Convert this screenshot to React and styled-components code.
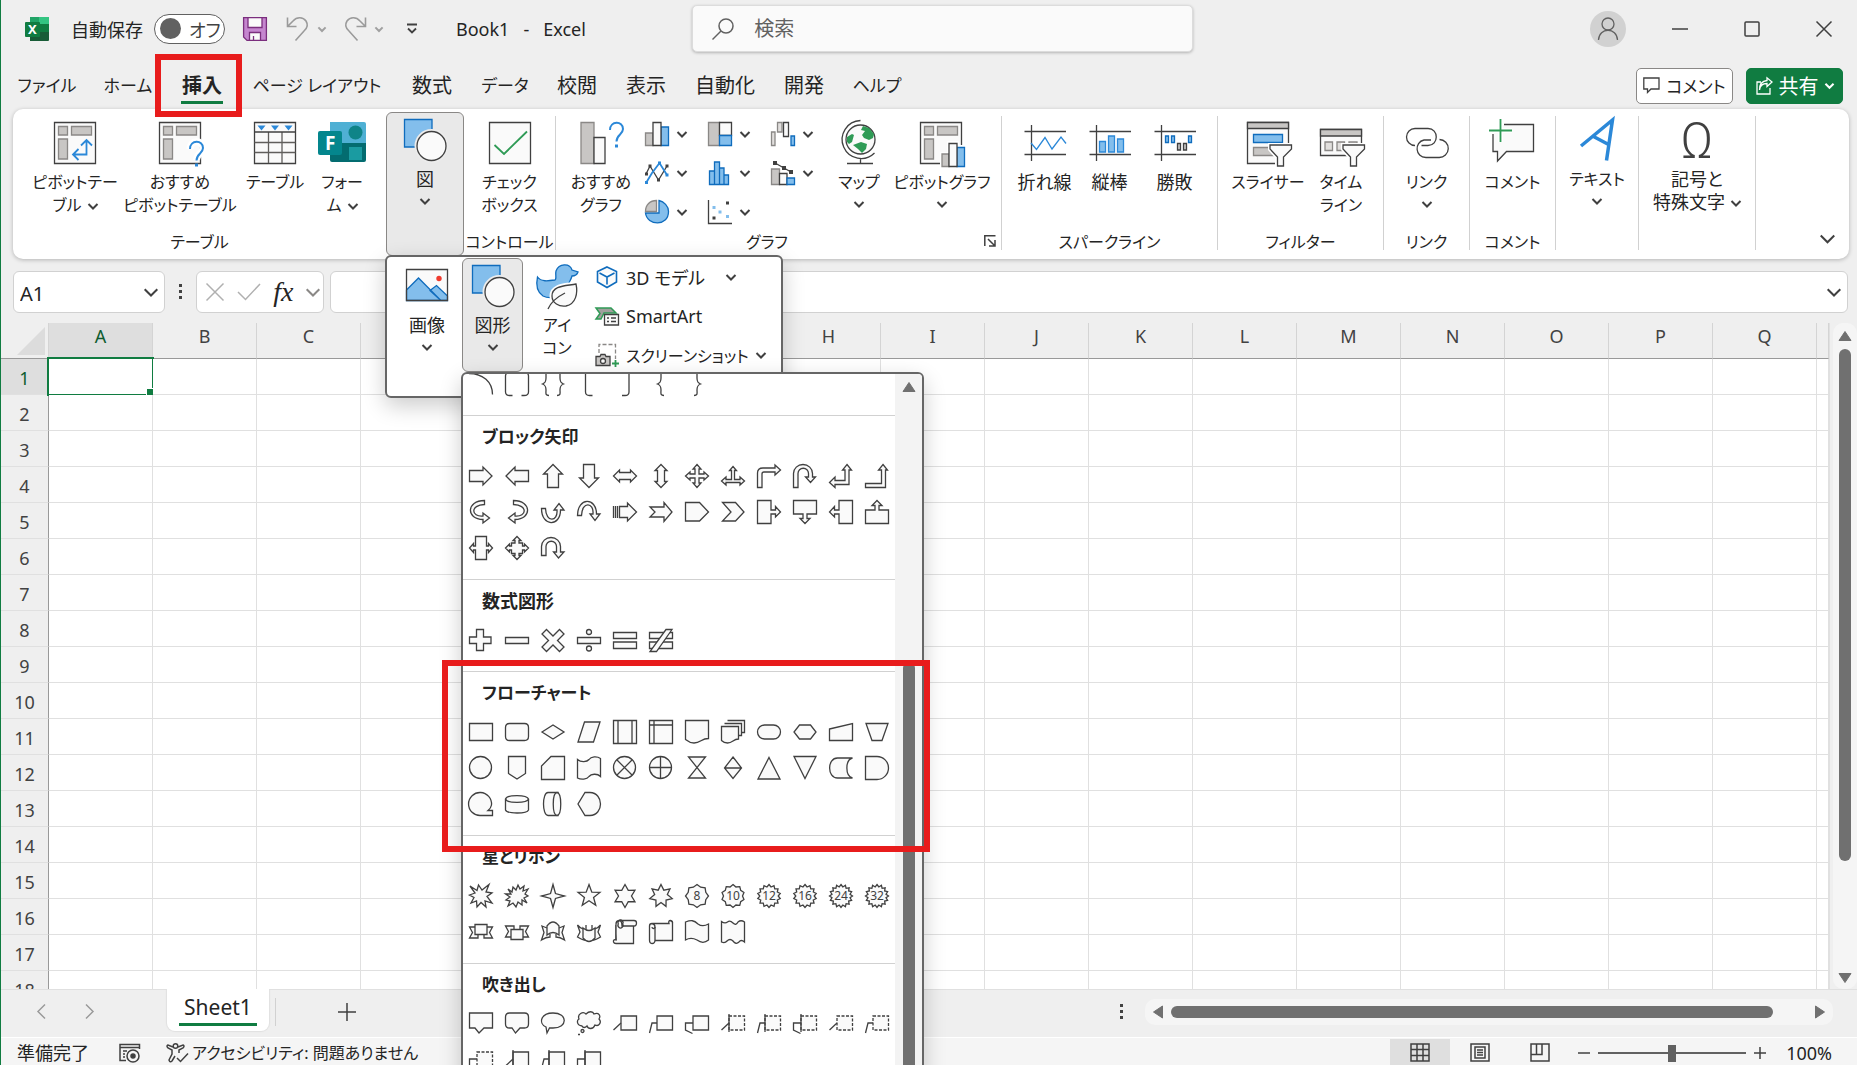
import React from 'react';
import styled, { createGlobalStyle, css } from 'styled-components';

const GlobalStyle = createGlobalStyle`
  * {
    box-sizing: border-box;
  }

  body {
    margin: 0;
    background: #efefef;
    color: #242424;
    font-family: "Noto Sans", "Noto Sans CJK JP", sans-serif;
    font-size: 18px;
    font-feature-settings: "palt";
  }

  button, input {
    font: inherit;
    font-feature-settings: inherit;
    color: inherit;
  }

  button {
    padding: 0;
    border: 0;
    background: none;
    white-space: nowrap;
    cursor: pointer;
  }

  svg {
    display: block;
    flex: none;
    overflow: visible;
  }
`;

const INK = '#404040';
const BLUE = '#0f6cbd';
const SKY = '#83beec';
const PAPER = '#fafafa';
const GRAY = '#c8c6c4';
const MID = '#8a8886';

/* ---------- small shared icons ---------- */

const Chevron = ({ size = 10, color = INK, weight = 2 }) => (
  <svg width={size} height={size} viewBox="0 0 10 10" fill="none" stroke={color} strokeWidth={(weight * 10) / size}>
    <path d="M.5 3L5 7.5 9.5 3" />
  </svg>
);

const Triangle = ({ turn = 0 }) => (
  <svg width="14" height="14" viewBox="0 0 14 14">
    <path d="M7 2.5L13 11.5H1z" fill="#707070" stroke="#707070" strokeLinejoin="round" transform={`rotate(${turn} 7 7)`} />
  </svg>
);

const Icon = ({ size = 24, box = 24, children }) => (
  <svg width={size} height={size} viewBox={`0 0 ${box} ${box}`} fill="none" stroke={INK} strokeWidth="1.3">
    {children}
  </svg>
);

const BigIcon = ({ children }) => <Icon size={48} box={48}>{children}</Icon>;

/* ---------- ribbon icons ---------- */

const PivotBase = () => (
  <>
    <path d="M3.5 3.5H44.5V44.5H3.5z" fill={PAPER} />
    <path d="M7.5 7.5H16.5V16H7.5zM20.5 7.5H40.5V16H20.5zM7.5 20H16.5V40H7.5z" fill={GRAY} stroke={MID} />
  </>
);

const Question = ({ x = 0, y = 0 }) => (
  <g transform={`translate(${x} ${y})`}>
    <path d="M1 8C1-1.5 14-1.5 14 7 14 12.5 7.5 12.5 7.5 19" stroke="#fff" strokeWidth="7" />
    <path d="M1 8C1-1.5 14-1.5 14 7 14 12.5 7.5 12.5 7.5 19.5" stroke="#2b88d8" strokeWidth="2" />
    <path d="M7.5 22.5V25.5" stroke="#2b88d8" strokeWidth="3" />
  </g>
);

const PivotIcon = () => (
  <BigIcon>
    <PivotBase />
    <path d="M35.5 21V35.5H22M30 26.5L35.5 21 41 26.5M27.5 30L22 35.5 27.5 41" stroke="#2b88d8" strokeWidth="1.8" />
  </BigIcon>
);

const PivotHelpIcon = () => (
  <BigIcon>
    <PivotBase />
    <Question x={33} y={22} />
  </BigIcon>
);

const TableIcon = () => (
  <BigIcon>
    <path d="M3.5 3.5H44.5V44.5H3.5z" fill={PAPER} />
    <path d="M3.5 23.5H44.5M3.5 33.5H44.5M17.5 13V44M31 13V44" stroke="#605e5c" />
    <path d="M3.5 13H44.5" />
    <path d="M6.5 6.5H14.5L10.5 11.5zM20 6.5H28L24 11.5zM33.5 6.5H41.5L37.5 11.5z" fill="#2b88d8" stroke="none" />
  </BigIcon>
);

const FormsIcon = () => (
  <BigIcon>
    <g stroke="none">
      <path d="M12 3H46Q48 3 48 5V25H12z" fill="#4fb0d4" />
      <path d="M12 24H48V41Q48 43 46 43H14Q12 43 12 41z" fill="#036c70" />
      <circle cx="37.5" cy="13.5" r="7" fill="#0f8488" />
      <path d="M31 28H44V41H31z" fill="#1a9ba1" />
      <rect y="12" width="24" height="24" rx="2" fill="#04868d" />
      <text x="7" y="31" fill="#fff" fontSize="19" fontWeight="700">F</text>
    </g>
  </BigIcon>
);

const ShapesIcon = () => (
  <BigIcon>
    <path d="M3.5 3.5H31V31H3.5z" fill={SKY} stroke={BLUE} />
    <circle cx="30.5" cy="30" r="17" fill="#ececec" stroke="none" />
    <circle cx="30.5" cy="30" r="14.5" fill={PAPER} />
  </BigIcon>
);

const CheckboxIcon = () => (
  <BigIcon>
    <path d="M3.5 3.5H44.5V44.5H3.5z" fill={PAPER} />
    <path d="M8.5 26L18 35 41 12.5" stroke="#2f9b56" strokeWidth="1.8" />
  </BigIcon>
);

const ChartHelpIcon = () => (
  <BigIcon>
    <path d="M4 3.5H17V44.5H4z" fill={GRAY} stroke={MID} />
    <path d="M17 18.5H28V44.5H17z" fill={PAPER} />
    <Question x={32} y={3} />
  </BigIcon>
);

const GlobeIcon = () => (
  <BigIcon>
    <circle cx="25.5" cy="20.5" r="14.5" fill={PAPER} />
    <g fill="#2f9b56" stroke="none">
      <path d="M28 7L34 9 39 15 38 19 34 21 29 19 27 16 30 12 26 11z" />
      <path d="M12 18L17 15 19 16 17 23 14 25 12 23z" />
      <path d="M18 26L26 23 32 25 31 30 27 34 23 30z" />
    </g>
    <path d="M25.5 1.5A19 19 0 1 0 39.5 34M25.5 39V44.5M12 44.5H38" />
  </BigIcon>
);

const PivotChartIcon = () => (
  <BigIcon>
    <g transform="translate(-1 0)"><PivotBase /></g>
    <path d="M22 33H29V22H41V26H49V49H22z" fill="#fff" stroke="none" />
    <path d="M24 35H31V47.5H24z" fill={GRAY} stroke={MID} />
    <path d="M39 28.5H46.5V47.5H39z" fill={SKY} stroke={BLUE} />
    <path d="M31 24.5H39V47.5H31z" fill={PAPER} />
  </BigIcon>
);

const SparkAxes = () => <path d="M3.5 12.5H45M3.5 35.5H45M10.5 6V42" />;

const SparkLineIcon = () => (
  <BigIcon>
    <SparkAxes />
    <path d="M10 24L15.5 30.5 24 18.5 31 30 40 18 45 24.5" stroke="#2b88d8" />
  </BigIcon>
);

const SparkColumnIcon = () => (
  <BigIcon>
    <SparkAxes />
    <path d="M13.5 22.5H19.5V33H13.5zM22.5 17H28.5V33H22.5zM31.5 20H37.5V33H31.5z" fill={SKY} stroke="#2b88d8" />
  </BigIcon>
);

const SparkWinIcon = () => (
  <BigIcon>
    <SparkAxes />
    <path d="M14.5 17H17.5V23.5H14.5zM20.5 17H23.5V23.5H20.5zM37.5 17H40.5V23.5H37.5z" fill={SKY} stroke={BLUE} />
    <path d="M26.5 24.5H29.5V31H26.5zM32.5 24.5H35.5V31H32.5z" fill={GRAY} />
  </BigIcon>
);

const Funnel = () => (
  <>
    <path d="M24 24H49V49H31V39L24 31z" fill="#fff" stroke="none" />
    <path d="M26 26H47.5V30L39.5 38V47H33.5V38L26 30z" fill={PAPER} />
  </>
);

const SlicerIcon = () => (
  <BigIcon>
    <path d="M3.5 3.5H44.5V44.5H3.5z" fill={PAPER} />
    <path d="M3.5 3.5H44.5V9.5H3.5z" fill={GRAY} />
    <path d="M9.5 15.5H38.5V23.5H9.5z" fill={SKY} stroke={BLUE} />
    <path d="M9.5 28.5H38.5V36.5H9.5z" fill={GRAY} stroke={MID} />
    <Funnel />
  </BigIcon>
);

const TimelineIcon = () => (
  <BigIcon>
    <path d="M3.5 10.5H44.5V36.5H3.5z" fill={PAPER} />
    <path d="M3.5 10.5H44.5V17H3.5z" fill={GRAY} />
    <path d="M8 23H15.5V31.5H8zM20 23H27.5V31.5H20zM32 23H40V31.5H32z" fill="#e1dfdd" stroke={MID} />
    <Funnel />
  </BigIcon>
);

const LinkIcon = () => (
  <BigIcon>
    <path d="M12 26.5A8.5 8.5 0 0 1 12 9.5H25C36 9.5 36 26.5 25 26.5H18.5" />
    <path d="M36.5 20.5A9 9 0 0 1 36 38.5H23C12 38.5 11 23 21 21H28" />
  </BigIcon>
);

const CommentIcon = () => (
  <BigIcon>
    <path d="M15 5.5H44.5V32.5H17.5L8.5 42V32.5H4V15" fill={PAPER} />
    <path d="M11.5 0V23M0 11.5H23" stroke="#fff" strokeWidth="5" />
    <path d="M11.5 0V23M0 11.5H23" stroke="#2f9b56" strokeWidth="1.8" />
  </BigIcon>
);

const WordArtIcon = () => (
  <BigIcon>
    <path d="M8 30L39.5 4 33.5 44.5M20.5 20.5L36.5 29" stroke="#2b88d8" strokeWidth="3.5" />
  </BigIcon>
);

const OmegaIcon = () => (
  <BigIcon>
    <text x="24" y="42" textAnchor="middle" fontSize="50" fontFamily="Roboto" fontWeight="300" fill={INK} stroke="none">Ω</text>
  </BigIcon>
);

const PictureIcon = () => (
  <BigIcon>
    <path d="M3.5 7.5H44.5V38.5H3.5z" fill={PAPER} stroke="none" />
    <path d="M3.5 28L15.5 16 38 38.5H3.5zM27 28.5L33.5 23.5 44.5 34V38.5H38z" fill={SKY} stroke={BLUE} />
    <circle cx="36" cy="16.5" r="2.7" fill="#f03a2e" stroke="none" />
    <path d="M3.5 7.5H44.5V38.5H3.5z" />
  </BigIcon>
);

const DuckIcon = () => (
  <BigIcon>
    <path d="M4.500 15C8 20 15 19 22 18 24 17 22 13 23 9 26 1 37 1 39 8L45 10C44 13 41 14 39 14 38 18 36 20 35 23 33 34 18 38 10 34 4 30 3 22 4.500 15z" fill={SKY} stroke={BLUE} />
    <path d="M43 22C34 24 19 23 19 34 19 41 26 45 33 44 43 42 45 31 43 22z" fill={PAPER} stroke="#fff" strokeWidth="5" />
    <path d="M43 22C34 24 19 23 19 34 19 41 26 45 33 44 43 42 45 31 43 22zM15 47C18 40 24 35 32 31" fill={PAPER} />
  </BigIcon>
);

const CubeIcon = () => (
  <Icon>
    <path d="M12 2L21.5 6.5V17L12 22.5 2.5 17V6.5zM4.5 8L12 12 19.5 8M12 12V19.5" stroke={BLUE} strokeWidth="1.6" fill={PAPER} />
  </Icon>
);

const SmartArtIcon = () => (
  <Icon>
    <path d="M1 4H16L21 9H9L6 15H1L5 9.5z" fill="#a19f9d" stroke="#2f9b56" strokeWidth="1.5" />
    <path d="M9.5 10.5H23.5V21H9.5z" fill={PAPER} />
    <path d="M12 14H14M16 14H21M12 17.5H14M16 17.5H21" />
  </Icon>
);

const ScreenshotIcon = () => (
  <Icon>
    <path d="M4 10V1.5H20.5V16" stroke={MID} strokeDasharray="4 2" />
    <path d="M1 13.5H5L6 11.5H10L11 13.5H15V22.5H1z" fill={GRAY} />
    <circle cx="8" cy="18" r="2.5" fill={PAPER} />
    <path d="M20.5 17V24M17 20.5H24" stroke="#2f9b56" strokeWidth="1.8" />
  </Icon>
);

/* chart pickers, three rows of the graph group */
const chartIcons = [
  ['縦棒グラフ', <>
    <path d="M.5 11H8V23.5H.5z" fill={GRAY} stroke={MID} />
    <path d="M16 5H23.5V23.5H16z" fill={SKY} stroke={BLUE} />
    <path d="M8 .5H16V23.5H8z" fill={PAPER} />
  </>],
  ['階層構造グラフ', <>
    <path d="M.5 .5H11.5V23.5H.5z" fill={GRAY} stroke={MID} />
    <path d="M11.5 .5H23.5V13.5H11.5z" fill={PAPER} />
    <path d="M11.5 13.5H23.5V23.5H11.5z" fill={SKY} stroke={BLUE} />
  </>],
  ['ウォーターフォール', <>
    <path d="M.5 10H4V23.5H.5zM6.5 .5H11V10H6.5z" fill="#e1dfdd" stroke={MID} />
    <path d="M12.5 .5H17.5V14.5H12.5z" fill={PAPER} />
    <path d="M20 14H23.5V23.5H20z" fill={SKY} stroke={BLUE} />
  </>],
  ['折れ線グラフ', <>
    <path d="M1 13L5 5 13.5 19 22 5" />
    <path d="M1 22L7 12 14.5 2 22 14" stroke="#2b88d8" strokeWidth="1.8" />
    <path d="M3.5 3.5h3v3h-3zM12 17.5h3v3h-3zM20.5 3.5h3v3h-3zM0 11.5h3v3H0z" fill={INK} stroke="none" />
    <path d="M0 20h3v3H0zM13 .5h3v3h-3zM20.5 12.5h3v3h-3z" fill="#2b88d8" stroke="none" />
  </>],
  ['統計グラフ', <path d="M1.5 10H6.5V23.5H1.5zM6.5 1H11.5V23.5H6.5zM11.5 7H16V23.5H11.5zM16 14H20.5V23.5H16z" fill={SKY} stroke={BLUE} />],
  ['組み合わせグラフ', <>
    <path d="M.5 8H8.5V23.5H.5z" fill={GRAY} stroke={MID} />
    <path d="M8.5 12.5H16V23.5H8.5z" fill={PAPER} />
    <path d="M16 17H23.5V23.5H16z" fill={SKY} stroke={BLUE} />
    <path d="M4 2L13 7 20 11" />
    <path d="M2 0h4v4H2zM11 5h4v4h-4zM18 9h4v4h-4z" fill={INK} stroke="none" />
  </>],
  ['円グラフ', <>
    <path d="M14 .5V13H.5C2 26 23.5 27 23.5 11.5 23.5 6 19 1.5 14 .5z" fill={SKY} stroke={BLUE} />
    <path d="M11.5 .5V11.5H.5C.5 5 5 .5 11.5 .5z" fill={GRAY} stroke={MID} />
  </>],
  ['散布図', <>
    <path d="M.5 0V23.5H24" />
    <path d="M18 1.5h3v3h-3zM4.5 16.5h3v3h-3z" fill={INK} stroke="none" />
    <path d="M4.5 6h3v3h-3zM10.5 10.5h3v3h-3zM18 15h3v3h-3z" fill={SKY} stroke="none" />
  </>],
];

/* ---------- shape gallery data (24 x 24 boxes) ---------- */

const star = (points, inner, outer = 11.5) => {
  const out = [];
  for (let i = 0; i < points * 2; i += 1) {
    const r = i % 2 ? inner : outer;
    const a = (Math.PI * i) / points - Math.PI / 2;
    out.push(`${(12 + r * Math.cos(a)).toFixed(2)} ${(12 + r * Math.sin(a)).toFixed(2)}`);
  }
  return `M${out.join('L')}z`;
};

const FLIP = 'matrix(-1 0 0 1 24 0)';
const UPSIDE = 'matrix(1 0 0 -1 0 24)';
const CURVED = 'M15.5 .5C-3 .5-3 19.5 14 19.5V23L20.5 18 14 13V16C2 17 1 5 15.5 4.5z';
const CIRCLE = 'M.5 11.5a11 11 0 1 0 22 0a11 11 0 1 0-22 0z';
const CALLOUT_RIGHT = 'M.5 .5H14V10H18.5V6.5L23.5 12 18.5 17V14H14V23.5H.5z';

const line = (d) => ({ d, fill: 'none' });
const turned = (d, t) => ({ d, t });
const badge = (n, points, inner) => [star(points, inner), { text: n }];
const boxCallout = (leader, dashed, bar) => [
  dashed ? { d: 'M8 4H23.5V18H8z', dash: '3 1.5' } : 'M8 4H23.5V18H8z',
  line(leader),
  ...(bar ? [line('M8 2V20')] : []),
];

const lineShapes = [
  [line('M0 1.5C14 1.5 23.5 10 23.5 22.5')],
  [line('M7.5 23.5H5Q.5 23.5 .5 20V4Q.5 .5 5 .5M16.5 23.5H19Q23.5 23.5 23.5 20V4Q23.5 .5 19 .5')],
  [line('M8 23.5C4 23.5 5 21 5 18 5 14 4 13 1.5 12 4 11 5 10 5 6V0M16 23.5C20 23.5 19 21 19 18 19 14 20 13 22.5 12 20 11 19 10 19 6V0')],
  [line('M15.5 23.5H12.5Q8.5 23.5 8.5 20V0')],
  [line('M9 23.5H12Q16 23.5 16 20V0')],
  [line('M15 23.5C11 23.5 12 21 12 18 12 14 11 13 8.5 12 11 11 12 10 12 6V0')],
  [line('M9 23.5C13 23.5 12 21 12 18 12 14 13 13 15.5 12 13 11 12 10 12 6V0')],
];

const blockArrows = [
  ['M.5 6.5H14V3L23 12 14 21V17.5H.5z'],
  ['M23.5 6.5H10V3L1 12 10 21V17.5H23.5z'],
  ['M6.5 23.5V10H2.5L12 .5 21.5 10H17.5V23.5z'],
  ['M6.5 .5V14H2.5L12 23.5 21.5 14H17.5V.5z'],
  ['M.5 12L6.5 6V8.5H17.5V6L23.5 12 17.5 18V15.5H6.5V18z'],
  ['M12 .5L18 6.5H15.5V17.5H18L12 23.5 6 17.5H8.5V6.5H6z'],
  ['M12 .5L16 5H14V10H19V8L23.5 12 19 16V14H14V19H16L12 23.5 8 19H10V14H5V16L.5 12 5 8V10H10V5H8z'],
  ['M12 2.500L15.5 6.5H13.5V15.5H19V13L23.5 17 19 21V18.5H5V21L.5 17 5 13V15.5H10.5V6.5H8.5z'],
  ['M.5 23.5V9Q.5 4 6 4H18V1L23.5 6 18 11V8H7Q5 8 5 10V23.5z'],
  ['M.5 23.5V9.5A9.5 9 0 0 1 19.5 9.5V13H22.5L17.5 18.5 12.5 13H15.5V9.5A5 5 0 0 0 5 9.5V23.5z'],
  ['M18 .5L22.5 6H20V20.5H6V23.5L.5 18.5 6 13V16.5H16V6H13.5z'],
  ['M18 .5L22.5 6H20.5V23.5H.5V19.5H16.5V6H13.5z'],
  [CURVED],
  [turned(CURVED, FLIP)],
  [turned(CURVED, 'matrix(0 -1 1 0 0 24)')],
  [turned(CURVED, 'matrix(0 1 1 0 0 0)')],
  ['M6.5 6.5H14.5V3L23.5 12 14.5 21V17.5H6.5z', line('M.5 6V18M2.5 6V18M4.5 6V18')],
  ['M1 7H15V2.5L23 12 15 21.5V17H1L6 12z'],
  ['M.5 2.5H14.5L23.5 12 14.5 21H.5z'],
  ['M1.5 2.5H14.5L23 12 14.5 21H1.5L10 12z'],
  [CALLOUT_RIGHT],
  ['M.5 .5H23.5V14H14V18.5H17L12 23.5 7 18.5H10V14H.5z'],
  [turned(CALLOUT_RIGHT, FLIP)],
  ['M.5 23.5V10H10V5.5H7L12 .5 17 5.5H14V10H23.5V23.5z'],
  ['M6.5 .5H17.5V10H19.5V7.5L23.5 12 19.5 16.5V14H17.5V23.5H6.5V14H4.5V16.5L.5 12 4.5 7.5V10H6.5z'],
  ['M12 .5L16 4.5H14V7H17.5V10H19.5V8L23.5 12 19.5 16V14H17.5V17.5H14V19.5H16L12 23.5 8 19.5H10V17.5H6.5V14H4.5V16L.5 12 4.5 8V10H6.5V7H10V4.5H8z'],
  ['M.5 19.5V10.5A9.5 9 0 0 1 19.5 10.5V16H23L17.5 22 12.5 16H15.5V10.5A5 5 0 0 0 5 10.5V19.5z'],
];

const equations = [
  ['M7.5 1.5H14.5V9H22V15.5H14.5V22.5H7.5V15.5H.5V9H7.5z'],
  ['M.5 9.5H23.5V15.5H.5z'],
  ['M5.5 1.5L12 8 18.5 1.5 23 6 16.5 12.5 23 19 18.5 23.5 12 17 5.5 23.5 1 19 7.5 12.5 1 6z'],
  ['M.5 9.5H23.5V15.5H.5z', 'M9.5 4a2.5 2.5 0 1 0 5 0a2.5 2.5 0 1 0-5 0z', 'M9.5 20.5a2.5 2.5 0 1 0 5 0a2.5 2.5 0 1 0-5 0z'],
  ['M.5 4.5H23.5V10.5H.5z', 'M.5 14H23.5V20.5H.5z'],
  ['M.5 4.5H23.5V10.5H.5z', 'M.5 14H23.5V20.5H.5z', 'M17 1.5H23L7.5 23.5H1z'],
];

const flowchart = [
  ['M.5 3.5H23.5V20.5H.5z'],
  ['M4.5 3.5H19.5Q23.5 3.5 23.5 7.5V16.5Q23.5 20.5 19.5 20.5H4.5Q.5 20.5 .5 16.5V7.5Q.5 3.5 4.5 3.5z'],
  ['M1 12L12 5 23 12 12 19z'],
  ['M7.5 2H23L16.5 22H1z'],
  ['M.5 .5H23.5V23.5H.5zM5 .5V23.5M19 .5V23.5'],
  ['M.5 .5H23.5V23.5H.5zM5 .5V23.5M.5 5H23.5'],
  ['M.5 .5H23.5V18.5C16 18.5 16 23 9 23 5 23 3 21.5 .5 19.5z'],
  ['M6.5 .5H23.5V12.5H20', 'M3.5 3.5H20.5V15.5H17', 'M.5 6.5H17.5V19C12 19 12 23 6.5 23 4 23 2 22 .5 20.5z'],
  ['M7.5 5H16.5A7 7 0 0 1 16.5 19H7.5A7 7 0 0 1 7.5 5z'],
  ['M6.5 5H17.5L23 12 17.5 19H6.5L1 12z'],
  ['M.5 9L23.5 3.5V20.5H.5z'],
  ['M1 3.5H23L17 20.5H7z'],
  [CIRCLE],
  ['M3.5 .5H20.5V17.5L12 23 3.5 17.5z'],
  ['M10 .5H23.5V23.5H.5V10z'],
  ['M.5 3.5C4 6.5 10 6 12 3.5 14 .5 20 0 23.5 2.5V20.5C20 17 14 18 12 20.5 10 23.5 4 24 .5 22z'],
  [CIRCLE, line('M4 4L19 19M19 4L4 19')],
  [CIRCLE, line('M11.5 .5V22.5M.5 11.5H22.5')],
  ['M3.5 1H20.5L3.5 22H20.5z'],
  ['M12 1L20.5 12 12 22.5 3.5 12zM3.5 12H20.5'],
  ['M12 1.5L23 23H1z'],
  ['M1 .5H23L12 22.5z'],
  ['M8.5 2H23.5C16 4 16 20 23.5 22H8.5C-2 22-2 2 8.5 2z'],
  ['M.5 .5H12A11.5 11.5 0 0 1 12 23.5H.5z'],
  ['M19 18.5H23.5V23.5H11.5A11.5 11.5 0 1 1 22.5 13Q22 16 19 18.5z'],
  ['M.5 7V18C2 22 22 22 23.5 18V7', 'M.5 7C2 2.5 22 2.5 23.5 7 22 11.5 2 11.5 .5 7z'],
  ['M7 .5H17V23.5H7C1 23.5 1 .5 7 .5z', 'M16 .5C21 1 21 23 16 23.5 11 23 11 1 16 .5z'],
  ['M8 .5H13C27 1 27 23 13 23.5H8L1 12z'],
];

const RIBBON = ['M6 7H.5L3.5 12.5 .5 18H9V14.5', 'M18 7H23.5L20.5 12.5 23.5 18H15V14.5', 'M6 4.5H18V14.5H6z'];

const stars = [
  ['M1 2L8 6.5 9.5 1 13 6 20 .5 17 8 23 9 18 12.5 23 19 16 17 17 23 12 18.5 8 23 7.5 17 2 19 5 13.5 .5 11 6 9z'],
  ['M3 5L7 8 8 3 11 6 13 1 15 5 19 2 18 7 23 5 20 10 23 12 19 14 22 19 17 16 17 21 13 18 11 23 8 19 3 22 5 17 1 16 5 13 .5 10 6 10z'],
  [star(4, 3.5)],
  [star(5, 4.8)],
  [star(6, 6.5)],
  [star(7, 6.5)],
  badge('8', 8, 9.5),
  badge('10', 10, 9.5),
  badge('12', 14, 9.2),
  badge('16', 14, 9.2),
  badge('24', 16, 9.2),
  badge('32', 16, 9.2),
  RIBBON,
  RIBBON.map((d) => turned(d, UPSIDE)),
  ['M6 8L1 6 3 12.5 .5 20Q5 17 9 17V14', 'M18 8L23 6 21 12.5 23.5 20Q19 17 15 17V14', 'M6 6Q12-2 18 6V15Q12 10 6 15z'],
  ['M6 9Q3 8 .5 5L3 12 .5 17Q5 20 8 20', 'M18 9Q21 8 23.5 5L21 12 23.5 17Q19 20 16 20', 'M6 8Q12 13 18 8V18Q12 25 6 18z', line('M9 10V5M15 10V5')],
  ['M3 5V20Q0 19 .5 22 1 23.5 3 23.5H20.5V6', 'M6 .5H21Q23.5 .5 23.5 3 23.5 6 21 6H9Q9 .5 6 .5 3 1 3 4V20', line('M5.5 4a2.5 2.5 0 1 0 4 0a2.5 2.5 0 1 0-4 0')],
  ['M3.5 3.5H20Q19 .5 21.5 .5 24 1 23.5 4V20.5H6', 'M.5 6Q.5 3.5 3 3.5 6 4 6 7V20Q6 23.5 3 23.5 .5 23.5 .5 20z', line('M3 7a1.5 1.5 0 1 0 3 0')],
  ['M.5 2C6 0 9 0 13 4 17 7 20 6 23.5 4V20C20 23 16 23 12 20 8 18 4 18 .5 20z'],
  ['M.5 1.5Q4 4 6.5 2 9 0 12 3 15 6 17 2 20-.5 23.5 2V22Q20 19 18 22 15 25 12 21 9 18 6 21 4 23.5 .5 22z'],
];

const callouts = [
  ['M.5 1H23.5V16H15L10 21 6 16H.5z'],
  ['M4.5 1H19.5Q23.5 1 23.5 5V12Q23.5 16 19.5 16H15L10.5 21 7 16H4.5Q.5 16 .5 12V5Q.5 1 4.5 1z'],
  ['M6 21L5 15C-3 11 0 1 12 1 27 1 27 16 12 16 10 16 9 16 8.5 16z'],
  ['M5 14C-1 13 0 8 2 7 0 2 6-1 9 2 12-1 16-1 17 2 22 0 24 4 22 7 25 10 22 15 18 13 16 18 11 17 10 14 8 16 6 16 5 14z', 'M4 19a1.5 1.5 0 1 0 3 0a1.5 1.5 0 1 0-3 0z', line('M1 22.5H3')],
  boxCallout('M.5 18L8 11'),
  boxCallout('M.5 21L3 11H8'),
  boxCallout('M7.5 21.5L.5 18V11H8'),
  boxCallout('M.5 18L8 11', true, true),
  boxCallout('M.5 21L3 11H8', true, true),
  boxCallout('M7.5 21.5L.5 18V11H8', true, true),
  boxCallout('M.5 18L8 11', true),
  boxCallout('M.5 21L3 11H8', true),
  boxCallout('M7.5 21.5L.5 18V11H8', true),
  boxCallout('M.5 18L8 11', false, true),
  boxCallout('M.5 21L3 11H8', false, true),
  boxCallout('M7.5 21.5L.5 18V11H8', false, true),
];

const Shape = ({ parts }) => (
  <Icon>
    {parts.map((part, i) => {
      if (part.text) {
        return <text key={i} x="12" y="16" textAnchor="middle" fontSize="12" fill={INK} stroke="none">{part.text}</text>;
      }
      const p = typeof part === 'string' ? { d: part } : part;
      return <path key={i} d={p.d} fill={p.fill || PAPER} transform={p.t} strokeDasharray={p.dash} />;
    })}
  </Icon>
);

/* ---------- window frame ---------- */

const Window = styled.div`
  display: flex;
  flex-direction: column;
  height: 100vh;
  overflow: hidden;
  border-left: 1px solid #107c41;
  background: #efefef;
`;

const TitleBar = styled.header`
  display: grid;
  grid-template-columns: 25fr 501px 24fr;
  align-items: center;
  height: 57px;
`;

const TitleLeft = styled.div`
  display: flex;
  align-items: center;
  padding-left: 24px;
  white-space: nowrap;
`;

const AutoSave = styled.label`
  display: flex;
  align-items: center;
  gap: 11px;
  margin: 0 18px 0 22px;
`;

const Switch = styled.button`
  display: flex;
  align-items: center;
  gap: 8px;
  width: 71px;
  height: 30px;
  padding-left: 5px;
  border: 1px solid #616161;
  border-radius: 15px;
  background: #fff;
  color: #424242;

  &::before {
    content: "";
    width: 21px;
    height: 21px;
    border-radius: 50%;
    background: #616161;
  }
`;

const QuickButton = styled.button`
  display: flex;
  align-items: center;
  gap: 8px;
  margin-left: ${(p) => p.$gap || 0}px;
`;

const BookName = styled.span`
  margin-left: 38px;
  white-space: pre;
`;

const SearchBox = styled.label`
  display: flex;
  align-items: center;
  gap: 18px;
  height: 47px;
  padding-left: 19px;
  border: 1px solid #dcdcdc;
  border-radius: 5px;
  background: #fafafa;
  box-shadow: 0 1px 3px rgba(0, 0, 0, 0.25);

  input {
    flex: 1;
    min-width: 0;
    border: 0;
    outline: 0;
    background: none;
    font-size: 20px;
  }

  input::placeholder {
    color: #616161;
    opacity: 1;
  }
`;

const WindowButtons = styled.div`
  display: flex;
  justify-content: flex-end;
  align-items: center;
  gap: 56px;
  padding-right: 25px;
`;

const Avatar = styled.button`
  display: grid;
  place-items: center;
  width: 36px;
  height: 36px;
  margin-right: -10px;
  border-radius: 50%;
  background: #d1d1d1;
`;

/* ---------- tabs ---------- */

const TabRow = styled.nav`
  display: flex;
  align-items: center;
  height: 52px;
  padding: 5px 14px 0 18px;
`;

const Tabs = styled.div`
  display: flex;
  gap: 29px;
  flex: 1;
`;

const Tab = styled.button`
  position: relative;
  display: flex;
  justify-content: center;
  width: ${(p) => p.$width}px;
  height: 36px;
  line-height: 36px;
  font-size: ${(p) => (p.$kana ? 17 : 20)}px;
  font-weight: ${(p) => (p.$active ? 700 : 400)};
  border-bottom: 3px solid ${(p) => (p.$active ? '#107c41' : 'transparent')};
`;

const marker = css`
  position: absolute;
  border: 6px solid #e81c1c;
  pointer-events: none;
`;

const TabMarker = styled.span`
  ${marker}
  inset: -14px -19px -16px -26px;
  z-index: 3;
`;

const ActionButton = styled.button`
  display: flex;
  align-items: center;
  justify-content: center;
  gap: 6px;
  width: 97px;
  height: 36px;
  margin-left: 13px;
  border: 1px solid ${(p) => (p.$primary ? '#107c41' : '#8a8886')};
  border-radius: 5px;
  background: ${(p) => (p.$primary ? '#107c41' : '#fff')};
  color: ${(p) => (p.$primary ? '#fff' : '#242424')};
  font-size: ${(p) => (p.$primary ? 20 : 17)}px;
`;

/* ---------- ribbon ---------- */

const Ribbon = styled.section`
  position: relative;
  z-index: 2;
  display: flex;
  flex: none;
  height: 150px;
  margin: 0 8px 0 12px;
  border-radius: 10px;
  background: #fff;
  box-shadow: 0 1px 4px rgba(0, 0, 0, 0.25);
`;

const Group = styled.div`
  display: flex;
  flex-direction: column;
  width: ${(p) => p.$width}px;
  padding-top: 5px;
`;

const GroupBody = styled.div`
  display: flex;
  justify-content: ${(p) => (p.$start ? 'flex-start' : 'center')};
  height: 113px;
  padding-left: ${(p) => p.$start || 0}px;
`;

const GroupLabel = styled.div`
  display: flex;
  align-items: center;
  height: 28px;
  font-size: 16px;
  white-space: nowrap;

  span {
    flex: 1;
    display: flex;
    justify-content: center;
  }

  button {
    margin: 0 5px 0 6px;
  }
`;

const Divider = styled.div`
  width: 1px;
  margin: 7px 0 9px;
  background: #d1d1d1;
`;

const BigButton = styled.button`
  display: flex;
  flex-direction: column;
  align-items: center;
  width: ${(p) => p.$width}px;
  padding-top: ${(p) => (p.$raised ? 2 : 5)}px;
  line-height: 23px;
  font-size: ${(p) => (p.$kanji ? 18 : 16)}px;

  > svg {
    margin-bottom: 4px;
  }
`;

const Line = styled.span`
  display: flex;
  align-items: center;
  justify-content: center;
  gap: 6px;
  width: 100%;
  min-height: ${(p) => (p.$arrow ? 19 : 23)}px;
`;

const Tool = ({ as: Button = BigButton, icon, lines, arrow, ...rest }) => (
  <Button {...rest}>
    {icon}
    {lines.map((text, i) => (
      <Line key={text}>
        {text}
        {arrow === 'inline' && i === lines.length - 1 && <Chevron />}
      </Line>
    ))}
    {arrow === 'below' && <Line $arrow><Chevron /></Line>}
  </Button>
);

const RibbonGroup = ({ width, label, start, launcher, children }) => (
  <Group $width={width}>
    <GroupBody $start={start}>{children}</GroupBody>
    <GroupLabel>
      <span>{label}</span>
      {launcher && (
        <button aria-label="グラフの設定">
          <svg width="12" height="12" viewBox="0 0 12 12" fill="none" stroke={INK} strokeWidth="1.5">
            <path d="M.8 11V.8H11.5M4 4L10.5 10.5M11 5V11H5" />
          </svg>
        </button>
      )}
    </GroupLabel>
  </Group>
);

const ChartGrid = styled.div`
  display: grid;
  grid-template-columns: repeat(3, 63px);
  grid-auto-rows: 39px;
  padding-left: 1px;
`;

const ChartButton = styled.button`
  display: flex;
  align-items: center;
  gap: 8px;
  padding-left: 4px;
`;

const Collapse = styled.button`
  align-self: flex-end;
  margin: 0 14px 13px auto;
`;

/* ---------- illustration menu ---------- */

const MenuHost = styled.div`
  position: relative;
  width: 78px;
  padding-top: 3px;
`;

const MenuButton = styled(BigButton)`
  height: 144px;
  padding-top: 3px;
  border: 1px solid #8a8886;
  border-radius: 6px;
  background: #e9e9e9;
`;

const popup = css`
  position: absolute;
  border: 2px solid #666;
  border-radius: 6px;
  background: #fff;
  box-shadow: 0 8px 22px rgba(0, 0, 0, 0.2);
`;

const MediaMenu = styled.div`
  ${popup}
  top: 146px;
  left: -1px;
  z-index: 4;
  display: flex;
  width: 398px;
  height: 143px;
  padding-left: 6px;
`;

const MediaButton = styled(BigButton)`
  height: 114px;
  margin-top: 1px;
  padding-top: 3px;
  border: 1px solid ${(p) => (p.$open ? '#8a8886' : 'transparent')};
  border-radius: 6px;
  background: ${(p) => (p.$open ? '#e9e9e9' : 'none')};
`;

const ShapesHost = styled.div`
  position: relative;
  margin: 0 3px 0 1px;
`;

const MediaList = styled.div`
  display: grid;
  grid-auto-rows: 39px;
  padding-left: 7px;
`;

const MediaRow = styled.button`
  display: flex;
  align-items: center;
  gap: 7px;
  font-size: ${(p) => (p.$small ? 16 : 18)}px;

  > svg:last-child:not(:first-child) {
    margin-left: ${(p) => p.$arrowGap || 0}px;
  }
`;

/* ---------- shape gallery ---------- */

const Gallery = styled.div`
  ${popup}
  top: 115px;
  left: -1px;
  z-index: 5;
  display: flex;
  width: 463px;
  height: 720px;
`;

const GalleryList = styled.div`
  flex: 1;
`;

const GallerySection = styled.section`
  position: relative;
  padding-bottom: 13px;
  border-bottom: 1px solid #d1d1d1;
`;

const GalleryTitle = styled.h3`
  height: 42px;
  margin: 0;
  padding-left: 19px;
  line-height: 42px;
  font-size: ${(p) => (p.$kana ? 17 : 18)}px;
  font-weight: 700;
`;

const ShapeGrid = styled.div`
  display: grid;
  grid-template-columns: repeat(12, 36px);
  grid-auto-rows: 36px;
  ${(p) => p.$clipped && css`
    height: 28px;
    align-content: end;
    overflow: hidden;
  `}

  button {
    display: grid;
    place-items: center;
  }
`;

const SectionMarker = styled.span`
  ${marker}
  inset: -12px -35px -17px -21px;
  z-index: 2;
`;

const GalleryScroll = styled.div`
  display: flex;
  flex-direction: column;
  align-items: center;
  width: 27px;
  padding-top: 6px;
  border-radius: 0 4px 0 0;
  background: #f3f3f3;

  i {
    width: 12px;
    height: 410px;
    margin-top: 268px;
    border-radius: 6px;
    background: #707070;
  }
`;

const ShapeSection = ({ title, items, marked, clipped, kana }) => (
  <GallerySection>
    {title && <GalleryTitle $kana={kana}>{title}</GalleryTitle>}
    <ShapeGrid $clipped={clipped}>
      {items.map((parts, i) => (
        <button key={i} aria-label={`${title || '線'} ${i + 1}`}><Shape parts={parts} /></button>
      ))}
    </ShapeGrid>
    {marked && <SectionMarker />}
  </GallerySection>
);

const ShapeGallery = () => (
  <Gallery>
    <GalleryList>
      <ShapeSection items={lineShapes} clipped />
      <ShapeSection title="ブロック矢印" items={blockArrows} kana />
      <ShapeSection title="数式図形" items={equations} />
      <ShapeSection title="フローチャート" items={flowchart} marked kana />
      <ShapeSection title="星とリボン" items={stars} kana />
      <ShapeSection title="吹き出し" items={callouts} kana />
    </GalleryList>
    <GalleryScroll>
      <Triangle />
      <i />
    </GalleryScroll>
  </Gallery>
);

/* ---------- formula bar ---------- */

const FormulaRow = styled.div`
  display: flex;
  align-items: center;
  flex: none;
  height: 64px;
  padding: 1px 9px 0 12px;
`;

const Field = styled.div`
  display: flex;
  align-items: center;
  justify-content: space-between;
  height: 42px;
  padding: 0 ${(p) => p.$end || 6}px 0 ${(p) => p.$pad || 6}px;
  border: 1px solid #d1d1d1;
  border-radius: 6px;
  background: #fff;
  ${(p) => (p.$width ? `width: ${p.$width}px;` : 'flex: 1;')}

  input {
    flex: 1;
    min-width: 0;
    padding: 3px 0 0;
    border: 0;
    outline: 0;
    background: none;
    font-size: 20px;
  }
`;

const FormulaField = styled(Field)`
  margin-left: 6px;
`;

const Dots = styled.span`
  display: grid;
  gap: 3px;
  margin: 0 ${(p) => p.$after || 14}px 0 14px;

  &::before, &::after {
    content: "";
  }

  &::before, &::after, i {
    width: 3px;
    height: 3px;
    background: #424242;
  }
`;

const Fx = styled.em`
  font-family: "Liberation Serif", serif;
  font-size: 28px;
  line-height: 30px;
`;

/* ---------- sheet ---------- */

const Sheet = styled.main`
  display: flex;
  flex: 1;
  min-height: 0;
`;

const SheetArea = styled.div`
  flex: 1;
  min-width: 0;
  overflow: hidden;
  border-right: 1px solid #e0e0e0;
`;

const Cells = styled.table`
  width: 100%;
  table-layout: fixed;
  border-collapse: separate;
  border-spacing: 0;

  th, td {
    height: 36px;
    padding: 0;
    border-right: 1px solid #e0e0e0;
    border-bottom: 1px solid #e0e0e0;
  }

  th {
    background: #efefef;
    color: #424242;
    font-weight: 400;
    line-height: 24px;
  }

  td {
    position: relative;
    background: #fff;
  }

  thead th {
    padding-bottom: 9px;
    border-right-color: #d4d4d4;
    border-bottom-color: #999;
  }

  tbody th {
    padding-top: 3px;
    border-right-color: #999;
  }

  thead th:first-child {
    width: 48px;
    padding: 0 0 3px 16px;
    vertical-align: bottom;
  }

  .on {
    background: #dedede;
    color: #0e5c2f;
  }
`;

const Column = styled.th`
  width: ${(p) => (p.$last ? 'auto' : '104px')};
`;

const Selection = styled.div`
  position: absolute;
  inset: -2px;
  border: 2px solid #107c41;

  &::after {
    content: "";
    position: absolute;
    right: -4px;
    bottom: -4px;
    width: 8px;
    height: 8px;
    border: 1px solid #fff;
    background: #107c41;
  }
`;

const VScroll = styled.div`
  display: flex;
  flex-direction: column;
  align-items: center;
  width: 24px;
  margin-left: 3px;
  padding: 6px 0 4px;
  border-radius: 10px;
  background: #f5f5f5;

  i {
    flex: 0 1 78%;
    width: 12px;
    margin: 6px 0 auto;
    border-radius: 6px;
    background: #707070;
  }
`;

/* ---------- sheet tabs and status bar ---------- */

const SheetTabs = styled.div`
  display: flex;
  align-items: center;
  flex: none;
  height: 48px;
  padding: 0 24px 4px 33px;
  border-top: 1px solid #e0e0e0;
`;

const Arrows = styled.div`
  display: flex;
  gap: 33px;
`;

const SheetTab = styled.button`
  align-self: flex-start;
  height: 42px;
  margin: -1px 0 0 70px;
  padding: 0 12px 4px;
  border-radius: 0 0 8px 8px;
  background: #fff;
  box-shadow: 0 0 1px 1px #e0e0e0;
  clip-path: inset(0 -2px -2px -2px);
  font-size: 21px;
  line-height: 32px;

  span {
    display: block;
    width: 78px;
    border-bottom: 3px solid #107c41;
  }
`;

const AddSheet = styled.button`
  display: flex;
  align-items: center;
  height: 28px;
  margin-left: 6px;
  padding-left: 62px;
  border-left: 1px solid #d1d1d1;
`;

const HScroll = styled.div`
  display: flex;
  align-items: center;
  width: 688px;
  height: 26px;
  padding: 0 6px;
  border-radius: 10px;
  background: #f5f5f5;

  i {
    width: 602px;
    height: 12px;
    margin: 0 auto 0 6px;
    border-radius: 6px;
    background: #707070;
  }
`;

const Spacer = styled.div`
  flex: 1;
`;

const StatusBar = styled.footer`
  display: flex;
  align-items: center;
  flex: none;
  height: 28px;
  padding: 3px 25px 0 16px;
  border-top: 1px solid #fff;
  background: #f5f5f5;
  line-height: 24px;
  white-space: nowrap;
`;

const StatusText = styled.span`
  margin-left: ${(p) => p.$gap || 0}px;
  font-size: ${(p) => p.$size || 18}px;
`;

const StatusIcon = styled.span`
  margin-left: ${(p) => p.$gap}px;
`;

const ViewButton = styled.button`
  display: grid;
  place-items: center;
  width: 60px;
  height: 27px;
  margin-top: -2px;
  background: ${(p) => (p.$on ? '#dfdfdf' : 'none')};
`;

const Zoom = styled.div`
  display: flex;
  align-items: center;
  gap: 8px;
  margin: 0 20px 0 8px;

  input {
    width: 148px;
    height: 18px;
    margin: 0;
    appearance: none;
    background: linear-gradient(#616161, #616161) center / 100% 2px no-repeat;
  }

  input::-webkit-slider-thumb {
    appearance: none;
    width: 8px;
    height: 17px;
    background: #616161;
  }
`;

const tabs = [
  ['ファイル', 56, true],
  ['ホーム', 48, true],
  ['挿入', 42],
  ['ページ レイアウト', 130, true],
  ['数式', 42],
  ['データ', 46, true],
  ['校閲', 40],
  ['表示', 40],
  ['自動化', 60],
  ['開発', 40],
  ['ヘルプ', 48, true],
];

const columns = 'ABCDEFGHIJKLMNOPQ'.split('');
const rows = Array.from({ length: 18 }, (_, i) => i + 1);

const UndoArrow = () => (
  <path d="M1.500 .5V9.5H10.5M1.5 9.5L7 4C11-.5 17 0 20 4 22.5 8 21.5 11 18 14L9.5 23.5" stroke="#9a9a9a" strokeWidth="1.6" />
);

const TopBar = () => (
  <TitleBar>
    <TitleLeft>
      <svg width="24" height="24" viewBox="0 0 24 24">
        <path d="M5 0H23Q24 0 24 1V23Q24 24 23 24H5z" fill="#185c37" />
        <path d="M5 0H14V12H5z" fill="#21a366" />
        <path d="M14 0H24V7H14z" fill="#33c481" />
        <path d="M14 7H24V15H14z" fill="#107c41" />
        <rect y="5" width="15" height="15" rx="1" fill="#107c41" />
        <text x="3" y="17" fill="#fff" fontSize="13" fontWeight="700">X</text>
      </svg>
      <AutoSave>
        自動保存
        <Switch role="switch" aria-checked="false">オフ</Switch>
      </AutoSave>
      <QuickButton aria-label="上書き保存">
        <svg width="24" height="24" viewBox="0 0 24 24" fill="#c586cf" stroke="#7b2e7e" strokeWidth="1.3">
          <path d="M.6 .6H23.4V23.4H4L.6 20z" />
          <path d="M5 .6H19V10.5H5zM6.5 15.5H17.5V23.4H6.5z" fill="#fafafa" />
          <path d="M10.5 19V23.4" />
        </svg>
      </QuickButton>
      <QuickButton aria-label="元に戻す" $gap={19}>
        <Icon><UndoArrow /></Icon>
        <Chevron size={8} color="#a0a0a0" weight={2} />
      </QuickButton>
      <QuickButton aria-label="やり直し" $gap={17}>
        <Icon><g transform={FLIP}><UndoArrow /></g></Icon>
        <Chevron size={8} color="#a0a0a0" weight={2} />
      </QuickButton>
      <QuickButton aria-label="クイック アクセス" $gap={23}>
        <svg width="12" height="12" viewBox="0 0 12 12" fill="none" stroke={INK} strokeWidth="1.8">
          <path d="M1 1.5H11M2 5.5L6 9.5 10 5.5" />
        </svg>
      </QuickButton>
      <BookName>Book1   -   Excel</BookName>
    </TitleLeft>
    <SearchBox>
      <svg width="22" height="22" viewBox="0 0 22 22" fill="none" stroke="#616161" strokeWidth="1.5">
        <circle cx="14" cy="8" r="7" />
        <path d="M9 13L.5 21.5" />
      </svg>
      <input placeholder="検索" aria-label="検索" />
    </SearchBox>
    <WindowButtons>
      <Avatar aria-label="アカウント">
        <svg width="22" height="24" viewBox="0 0 22 24" fill="none" stroke="#616161" strokeWidth="1.3">
          <circle cx="11" cy="7" r="6" />
          <path d="M1.5 23C2 10 20 10 20.5 23" />
        </svg>
      </Avatar>
      <button aria-label="最小化">
        <svg width="16" height="16" viewBox="0 0 16 16"><path d="M0 8H16" stroke={INK} strokeWidth="1.5" /></svg>
      </button>
      <button aria-label="最大化">
        <svg width="16" height="16" viewBox="0 0 16 16"><rect x="1" y="1" width="14" height="14" rx="1" fill="none" stroke={INK} strokeWidth="1.5" /></svg>
      </button>
      <button aria-label="閉じる">
        <svg width="16" height="16" viewBox="0 0 16 16"><path d="M.5 .5L15.5 15.5M15.5 .5L.5 15.5" stroke={INK} strokeWidth="1.5" /></svg>
      </button>
    </WindowButtons>
  </TitleBar>
);

const TabBar = () => (
  <TabRow>
    <Tabs>
      {tabs.map(([name, width, kana]) => (
        <Tab key={name} $width={width} $kana={kana} $active={name === '挿入'}>
          {name}
          {name === '挿入' && <TabMarker />}
        </Tab>
      ))}
    </Tabs>
    <ActionButton>
      <svg width="17" height="17" viewBox="0 0 17 17" fill="none" stroke={INK} strokeWidth="1.3">
        <path d="M.8 1H16V12H8L4.5 15.5V12H.8z" />
      </svg>
      コメント
    </ActionButton>
    <ActionButton $primary>
      <svg width="17" height="18" viewBox="0 0 17 18" fill="none" stroke="#fff" strokeWidth="1.3">
        <path d="M5 5H1V17H14V11M3.5 13C4 8 7 6.5 11 6.5V9.5L16 5 11 .8V3.5C6 4 3.5 7 3.5 13z" />
      </svg>
      共有
      <Chevron size={9} color="#fff" />
    </ActionButton>
  </TabRow>
);

const IllustrationMenu = () => (
  <MenuHost>
    <Tool as={MenuButton} $width={78} $kanji icon={<ShapesIcon />} lines={['図']} arrow="below" />
    <MediaMenu>
      <Tool as={MediaButton} $width={68} $kanji icon={<PictureIcon />} lines={['画像']} arrow="below" />
      <ShapesHost>
        <Tool as={MediaButton} $width={61} $kanji $open icon={<ShapesIcon />} lines={['図形']} arrow="below" />
        <ShapeGallery />
      </ShapesHost>
      <Tool as={MediaButton} $width={62} icon={<DuckIcon />} lines={['アイ', 'コン']} />
      <MediaList>
        <MediaRow $arrowGap={14}><CubeIcon />3D モデル<Chevron /></MediaRow>
        <MediaRow><SmartArtIcon />SmartArt</MediaRow>
        <MediaRow $small><ScreenshotIcon />スクリーンショット<Chevron /></MediaRow>
      </MediaList>
    </MediaMenu>
  </MenuHost>
);

const RibbonPanel = () => (
  <Ribbon>
    <RibbonGroup width={373} start={19} label="テーブル">
      <Tool $width={86} icon={<PivotIcon />} lines={['ピボットテー', 'ブル']} arrow="inline" />
      <Tool $width={124} icon={<PivotHelpIcon />} lines={['おすすめ', 'ピボットテーブル']} />
      <Tool $width={66} icon={<TableIcon />} lines={['テーブル']} />
      <Tool $width={68} icon={<FormsIcon />} lines={['フォー', 'ム']} arrow="inline" />
    </RibbonGroup>
    <IllustrationMenu />
    <RibbonGroup width={91} label="コントロール">
      <Tool $width={80} icon={<CheckboxIcon />} lines={['チェック', 'ボックス']} />
    </RibbonGroup>
    <Divider />
    <RibbonGroup width={445} start={6} label="グラフ" launcher>
      <Tool $width={78} icon={<ChartHelpIcon />} lines={['おすすめ', 'グラフ']} />
      <ChartGrid>
        {chartIcons.map(([name, art]) => (
          <ChartButton key={name} aria-label={name}>
            <Icon>{art}</Icon>
            <Chevron />
          </ChartButton>
        ))}
      </ChartGrid>
      <Tool $width={58} icon={<GlobeIcon />} lines={['マップ']} arrow="below" />
      <Tool $width={108} icon={<PivotChartIcon />} lines={['ピボットグラフ']} arrow="below" />
    </RibbonGroup>
    <Divider />
    <RibbonGroup width={215} label="スパークライン">
      <Tool $width={65} $kanji icon={<SparkLineIcon />} lines={['折れ線']} />
      <Tool $width={65} $kanji icon={<SparkColumnIcon />} lines={['縦棒']} />
      <Tool $width={65} $kanji icon={<SparkWinIcon />} lines={['勝敗']} />
    </RibbonGroup>
    <Divider />
    <RibbonGroup width={165} start={13} label="フィルター">
      <Tool $width={74} icon={<SlicerIcon />} lines={['スライサー']} />
      <Tool $width={72} icon={<TimelineIcon />} lines={['タイム', 'ライン']} />
    </RibbonGroup>
    <Divider />
    <RibbonGroup width={85} label="リンク">
      <Tool $width={80} icon={<LinkIcon />} lines={['リンク']} arrow="below" />
    </RibbonGroup>
    <Divider />
    <RibbonGroup width={85} label="コメント">
      <Tool $width={80} icon={<CommentIcon />} lines={['コメント']} />
    </RibbonGroup>
    <Divider />
    <RibbonGroup width={82}>
      <Tool $width={80} $raised icon={<WordArtIcon />} lines={['テキスト']} arrow="below" />
    </RibbonGroup>
    <Divider />
    <RibbonGroup width={116}>
      <Tool $width={110} $raised $kanji icon={<OmegaIcon />} lines={['記号と', '特殊文字']} arrow="inline" />
    </RibbonGroup>
    <Divider />
    <Collapse aria-label="リボンを折りたたむ"><Chevron size={15} /></Collapse>
  </Ribbon>
);

const FormulaBar = () => (
  <FormulaRow>
    <Field $width={152}>
      <input defaultValue="A1" aria-label="名前ボックス" />
      <Chevron size={14} />
    </Field>
    <Dots><i /></Dots>
    <Field $width={128} $pad={9} $end={3}>
      <svg width="18" height="18" viewBox="0 0 18 18"><path d="M.5 .5L17.5 17.5M17.5 .5L.5 17.5" stroke="#b0b0b0" strokeWidth="1.5" /></svg>
      <svg width="24" height="18" viewBox="0 0 24 18"><path d="M1 9L8.5 16.5 23 1" fill="none" stroke="#b0b0b0" strokeWidth="1.5" /></svg>
      <Fx>fx</Fx>
      <Chevron size={14} color="#8a8886" />
    </Field>
    <FormulaField>
      <input aria-label="数式バー" />
      <Chevron size={14} />
    </FormulaField>
  </FormulaRow>
);

const Grid = () => (
  <Sheet>
    <SheetArea>
      <Cells>
        <thead>
          <tr>
            <th aria-label="すべて選択">
              <svg width="28" height="28" viewBox="0 0 28 28"><path d="M28 0V28H0z" fill="#dcdcdc" /></svg>
            </th>
            {columns.map((c) => <Column key={c} className={c === 'A' ? 'on' : undefined}>{c}</Column>)}
            <Column $last aria-label="R" />
          </tr>
        </thead>
        <tbody>
          {rows.map((r) => (
            <tr key={r}>
              <th className={r === 1 ? 'on' : undefined}>{r}</th>
              {columns.map((c) => <td key={c}>{r === 1 && c === 'A' && <Selection />}</td>)}
              <td />
            </tr>
          ))}
        </tbody>
      </Cells>
    </SheetArea>
    <VScroll>
      <Triangle />
      <i />
      <Triangle turn={180} />
    </VScroll>
  </Sheet>
);

const TabStrip = () => (
  <SheetTabs>
    <Arrows>
      <button aria-label="前のシート">
        <svg width="15" height="15" viewBox="0 0 15 15"><path d="M11 .5L4 7.5 11 14.5" fill="none" stroke="#9a9a9a" strokeWidth="1.5" /></svg>
      </button>
      <button aria-label="次のシート">
        <svg width="15" height="15" viewBox="0 0 15 15"><path d="M4 .5L11 7.5 4 14.5" fill="none" stroke="#9a9a9a" strokeWidth="1.5" /></svg>
      </button>
    </Arrows>
    <SheetTab><span>Sheet1</span></SheetTab>
    <AddSheet aria-label="新しいシート">
      <svg width="18" height="18" viewBox="0 0 18 18"><path d="M9 0V18M0 9H18" stroke={INK} strokeWidth="1.5" /></svg>
    </AddSheet>
    <Spacer />
    <Dots $after={22}><i /></Dots>
    <HScroll>
      <Triangle turn={-90} />
      <i />
      <Triangle turn={90} />
    </HScroll>
  </SheetTabs>
);

const Status = () => (
  <StatusBar>
    <StatusText>準備完了</StatusText>
    <StatusIcon $gap={30}>
      <svg width="22" height="20" viewBox="0 0 22 20" fill="none" stroke={INK} strokeWidth="1.5">
        <path d="M7 17.5H1V1.5H20.5V6M1 4.5H20.5M4 8H8M4 11H6M4 14H6" />
        <circle cx="14" cy="13" r="6" />
        <circle cx="14" cy="13" r="2" fill={INK} />
      </svg>
    </StatusIcon>
    <StatusIcon $gap={25}>
      <svg width="24" height="20" viewBox="0 0 24 20" fill="none" stroke={INK} strokeWidth="1.5">
        <circle cx="9.5" cy="3" r="2.3" />
        <path d="M7 4L2 2Q0 3 2 5L6 7V11L3 17Q4 20 6 18L9 13M12 4L17 2Q19 3 17 5L13 7V10M11 15L14.5 18.5 22 10.5" />
      </svg>
    </StatusIcon>
    <StatusText $gap={2} $size={16}>アクセシビリティ: 問題ありません</StatusText>
    <Spacer />
    <ViewButton $on aria-label="標準">
      <svg width="20" height="19" viewBox="0 0 20 19" fill="none" stroke={INK} strokeWidth="1.5">
        <path d="M1 1H19V18H1zM1 6.5H19M1 12.5H19M7 1V18M13 1V18" />
      </svg>
    </ViewButton>
    <ViewButton aria-label="ページ レイアウト">
      <svg width="20" height="19" viewBox="0 0 20 19" fill="none" stroke={INK} strokeWidth="1.5">
        <path d="M1 1H19V18H1zM5 4H15V15H5zM7 7H13M7 9.5H13M7 12H13" />
      </svg>
    </ViewButton>
    <ViewButton aria-label="改ページ プレビュー">
      <svg width="20" height="19" viewBox="0 0 20 19" fill="none" stroke={INK} strokeWidth="1.5">
        <path d="M1 1H19V18H1zM1 11.5H12V1M6.5 1V11.5" />
      </svg>
    </ViewButton>
    <Zoom>
      <button aria-label="縮小">
        <svg width="12" height="12" viewBox="0 0 12 12"><path d="M0 6H12" stroke={INK} strokeWidth="1.5" /></svg>
      </button>
      <input type="range" min="0" max="200" defaultValue="100" aria-label="ズーム" />
      <button aria-label="拡大">
        <svg width="12" height="12" viewBox="0 0 12 12"><path d="M0 6H12M6 0V12" stroke={INK} strokeWidth="1.5" /></svg>
      </button>
    </Zoom>
    <StatusText>100%</StatusText>
  </StatusBar>
);

const App = () => (
  <Window>
    <GlobalStyle />
    <TopBar />
    <TabBar />
    <RibbonPanel />
    <FormulaBar />
    <Grid />
    <TabStrip />
    <Status />
  </Window>
);

export default App;
